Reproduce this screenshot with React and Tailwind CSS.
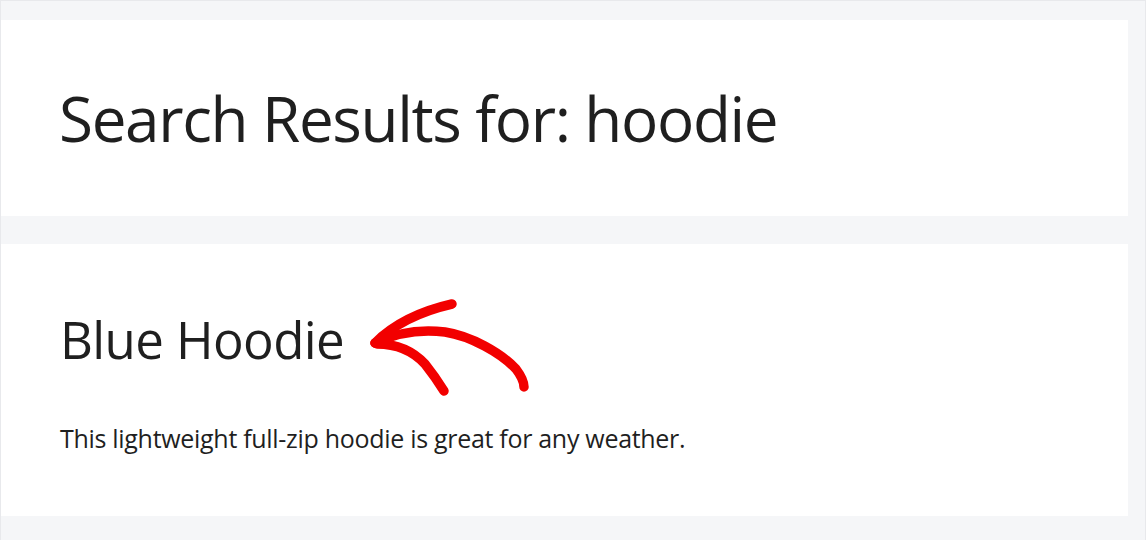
export default function App() {
  return (
    <div
      className="relative w-[1146px] h-[540px] overflow-hidden bg-[#f5f6f8] border-t border-r border-l border-[#e8e9ec] pt-[19px] pr-[17px] flex flex-col gap-[28px] text-[#1f1f1f]"
      style={{ fontFamily: '"Open Sans", "Noto Sans", sans-serif' }}
    >
      <div className="bg-white h-[196px] pl-[58px] pt-[67px]">
        <h1 className="text-[62px] leading-[1] font-normal tracking-[-1.35px] whitespace-nowrap">
          Search Results for: hoodie
        </h1>
      </div>
      <div className="bg-white h-[272px] pl-[59px] pt-[70px]">
        <h2 className="text-[51px] leading-[1] font-normal tracking-[-0.6px] whitespace-nowrap">
          Blue Hoodie
        </h2>
        <p className="mt-[61px] text-[25px] leading-[1] tracking-[-0.3px] whitespace-nowrap">
          This lightweight full-zip hoodie is great for any weather.
        </p>
      </div>
      <svg
        className="absolute left-[340px] top-[280px]"
        width="220"
        height="130"
        viewBox="0 0 220 130"
        fill="none"
        stroke="#f20000"
        strokeWidth="9.5"
        strokeLinecap="round"
        strokeLinejoin="round"
      >
        <path d="M34 62 C50 46, 76 31, 111 23" />
        <path d="M34 62 C55 52, 80 48, 104 51 C130 55, 160 72, 175 88 C181 96, 183 102, 183 106" />
        <path d="M36 63 C55 63, 72 70, 84 83 C92 93, 98 102, 103 110" />
      </svg>
    </div>
  );
}
